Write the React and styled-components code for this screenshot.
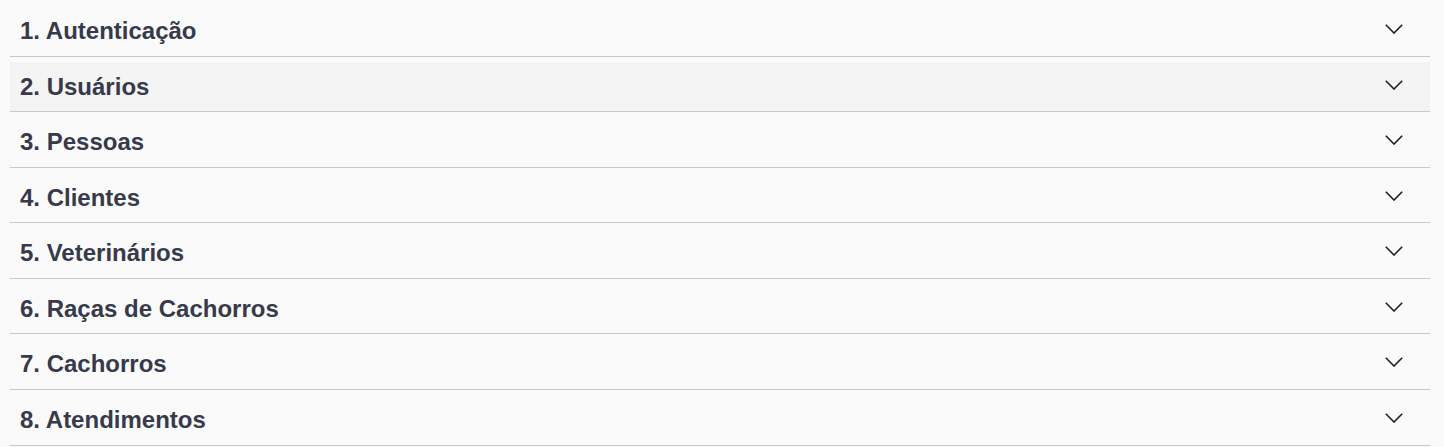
import React from "react"
import styled, { createGlobalStyle } from "styled-components"

const Global = createGlobalStyle`
    body {
        margin: 0;
        background: #fafafa;
        font-family: "Liberation Sans", Arial, sans-serif;
    }
`

const Accordion = styled.div`
    padding: 1px 14px 0 10px;
`

const Item = styled.div`
    padding-top: 5.57px;
    border-bottom: 1px solid #c9c9c9;
`

const Header = styled.button`
    width: 100%;
    height: 49px;
    display: flex;
    align-items: center;
    justify-content: space-between;
    padding: 0 27px 0 10px;
    border: 0;
    background: ${p => (p.$hover ? "#f4f4f4" : "transparent")};
    font-family: inherit;
    font-size: 24px;
    font-weight: 700;
    color: #363a4a;
    cursor: pointer;
    text-align: left;
`

const Chevron = styled.svg`
    width: 18px;
    height: 10px;
    margin-top: -4px;
    flex: none;
`

const sections = [
    "1. Autenticação",
    "2. Usuários",
    "3. Pessoas",
    "4. Clientes",
    "5. Veterinários",
    "6. Raças de Cachorros",
    "7. Cachorros",
    "8. Atendimentos",
]

export default function App() {
    return <>
        <Global />
        <Accordion>
            {sections.map((title, i) => (
                <Item key={title}>
                    <Header $hover={i === 1}>
                        <span>{title}</span>
                        <Chevron viewBox="0 0 18 10">
                            <polyline points="0.8,0.8 9,9 17.2,0.8" fill="none" stroke="#1f1f1f" strokeWidth="1.6" />
                        </Chevron>
                    </Header>
                </Item>
            ))}
        </Accordion>
    </>
}
